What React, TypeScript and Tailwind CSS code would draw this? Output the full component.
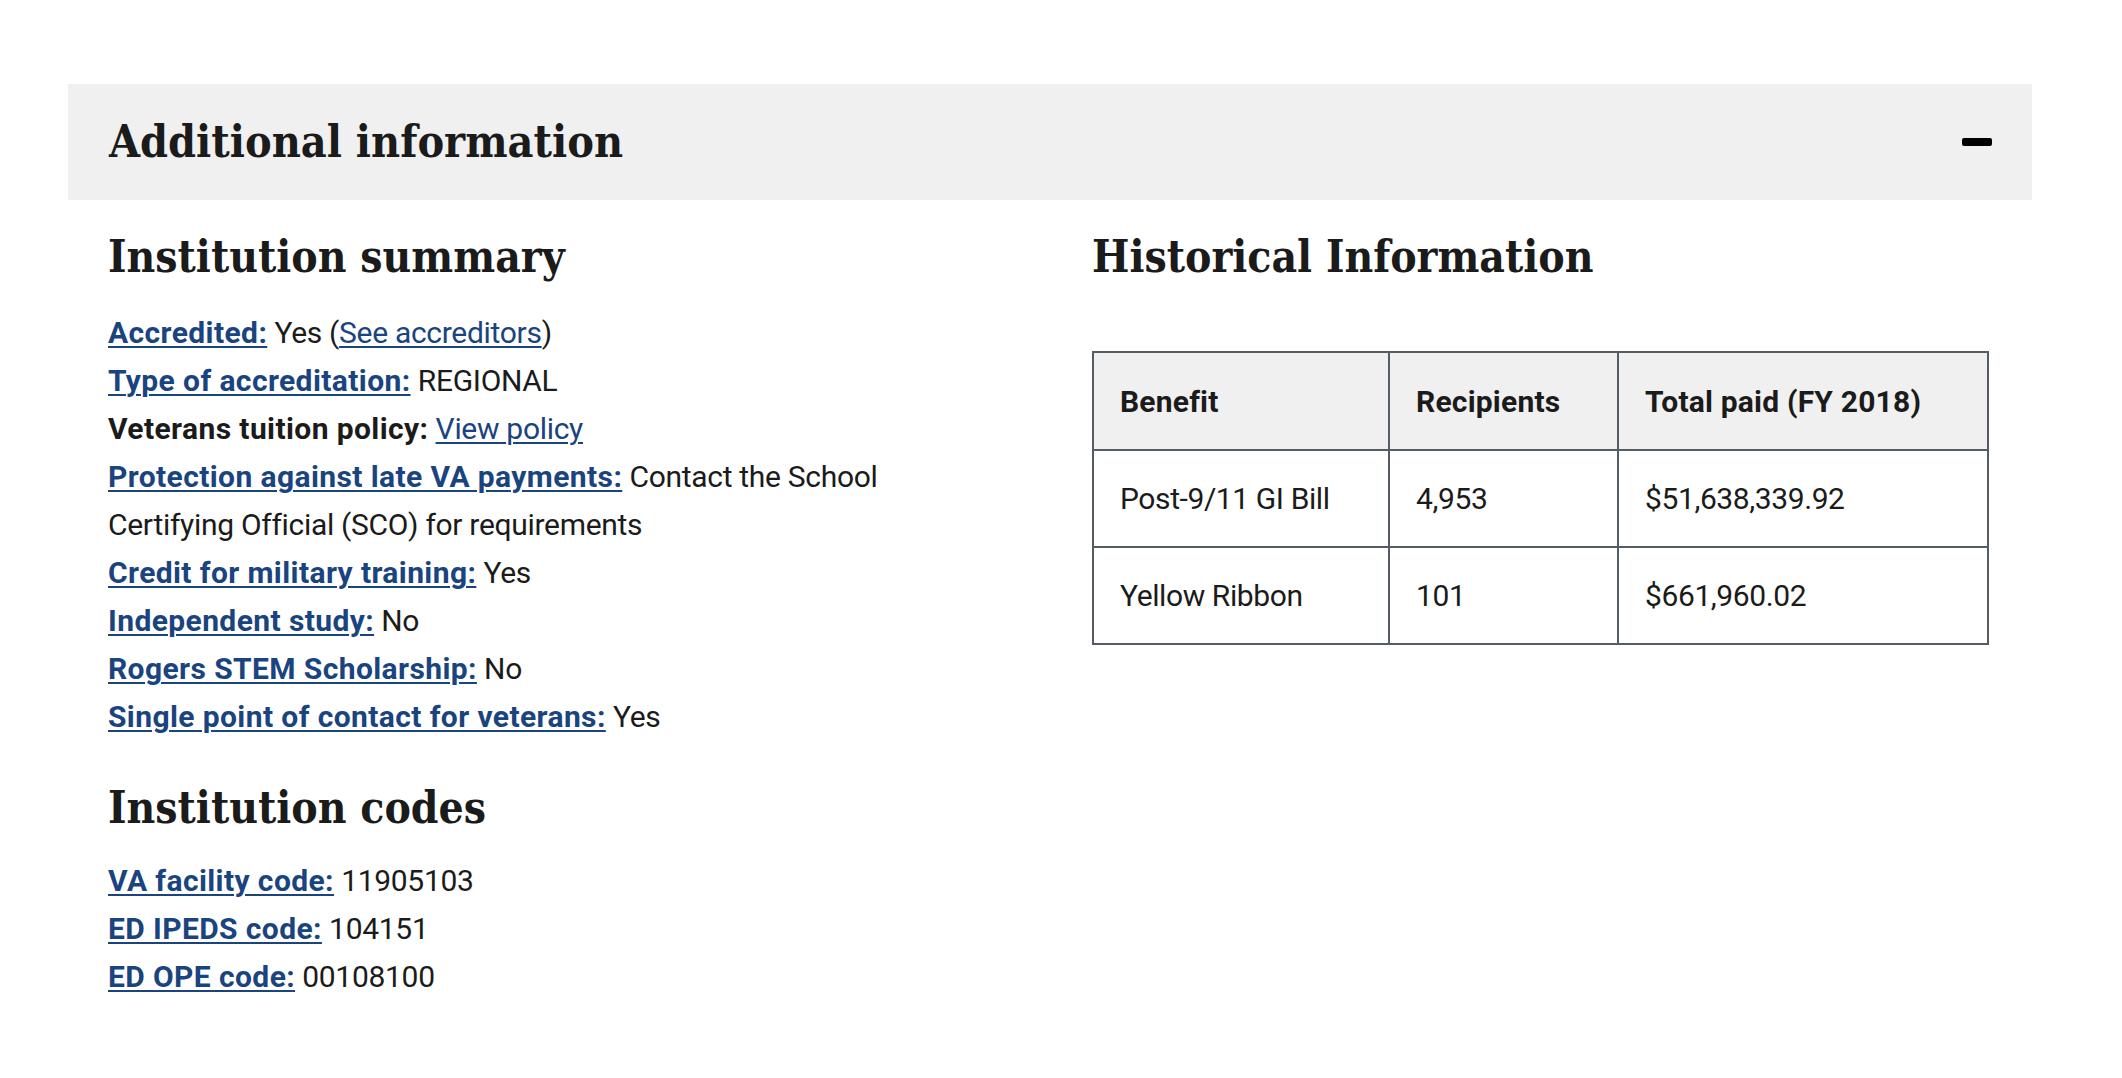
import React from "react";

const serif = "font-['DejaVu_Serif_Condensed','DejaVu_Serif',serif]";
const sans = "font-['Roboto','Liberation_Sans',sans-serif]";

function L({ children }: { children: React.ReactNode }) {
  return (
    <a
      href="#"
      className="font-bold tracking-[0.4px] text-[#1a4480] underline decoration-2 underline-offset-[3px]"
    >
      {children}
    </a>
  );
}

function RL({ children }: { children: React.ReactNode }) {
  return (
    <a href="#" className="text-[#1a4480] underline decoration-[1.5px] underline-offset-[3px]">
      {children}
    </a>
  );
}

function Row({ children }: { children: React.ReactNode }) {
  return <p className="m-0">{children}</p>;
}

const rows = [
  ["Post-9/11 GI Bill", "4,953", "$51,638,339.92"],
  ["Yellow Ribbon", "101", "$661,960.02"],
];

export default function App() {
  return (
    <div className={`min-h-[1078px] bg-white pl-[68px] pr-[90px] pt-[84px] text-[#1b1b1b] ${sans}`}>
      <div className="flex h-[116px] items-center justify-between bg-[#f0f0f0] pl-[41px] pr-[40px]">
        <h2 className={`m-0 -mt-[2px] text-[44.5px] leading-[52px] font-bold text-[#1b1b1b] ${serif}`}>
          Additional information
        </h2>
        <span className="block h-[8px] w-[30px] rounded-[2px] bg-black" aria-hidden="true" />
      </div>

      <div className="flex pl-[40px]">
        <div className="w-[984px] shrink-0">
          <h3 className={`m-0 mt-[31px] text-[44px] leading-[52px] font-bold ${serif}`}>
            Institution summary
          </h3>
          <div className="mt-[26px] max-w-[850px] text-[30px] leading-[48px] tracking-[-0.3px]">
            <Row>
              <L>Accredited:</L> Yes (<RL>See accreditors</RL>)
            </Row>
            <Row>
              <L>Type of accreditation:</L> REGIONAL
            </Row>
            <Row>
              <span className="font-bold tracking-[0.4px]">Veterans tuition policy:</span>{" "}
              <RL>View policy</RL>
            </Row>
            <Row>
              <L>Protection against late VA payments:</L> Contact the School Certifying Official (SCO)
              for requirements
            </Row>
            <Row>
              <L>Credit for military training:</L> Yes
            </Row>
            <Row>
              <L>Independent study:</L> No
            </Row>
            <Row>
              <L>Rogers STEM Scholarship:</L> No
            </Row>
            <Row>
              <L>Single point of contact for veterans:</L> Yes
            </Row>
          </div>

          <h3 className={`m-0 mt-[41px] text-[44px] leading-[52px] font-bold ${serif}`}>
            Institution codes
          </h3>
          <div className="mt-[23px] text-[30px] leading-[48px] tracking-[-0.3px]">
            <Row>
              <L>VA facility code:</L> 11905103
            </Row>
            <Row>
              <L>ED IPEDS code:</L> 104151
            </Row>
            <Row>
              <L>ED OPE code:</L> 00108100
            </Row>
          </div>
        </div>

        <div className="flex-1">
          <h3 className={`m-0 mt-[31px] text-[44px] leading-[52px] font-bold ${serif}`}>
            Historical Information
          </h3>
          <table className="mt-[68px] w-[897px] border-collapse border-2 border-[#565c65] text-[30px] leading-[48px]">
            <thead>
              <tr className="bg-[#f0f0f0]">
                <th className="w-[296px] border-2 border-[#565c65] px-[26px] pt-[25px] pb-[23px] text-left font-bold tracking-[0.2px]">
                  Benefit
                </th>
                <th className="w-[229px] border-2 border-[#565c65] px-[26px] pt-[25px] pb-[23px] text-left font-bold tracking-[0.2px]">
                  Recipients
                </th>
                <th className="border-2 border-[#565c65] px-[26px] pt-[25px] pb-[23px] text-left font-bold tracking-[0.2px]">
                  Total paid (FY 2018)
                </th>
              </tr>
            </thead>
            <tbody>
              {rows.map((r) => (
                <tr key={r[0]}>
                  {r.map((c, i) => (
                    <td
                      key={i}
                      className="border-2 border-[#565c65] px-[26px] pt-[24px] pb-[23px] text-left font-normal tracking-[-0.4px]"
                    >
                      {c}
                    </td>
                  ))}
                </tr>
              ))}
            </tbody>
          </table>
        </div>
      </div>
    </div>
  );
}
